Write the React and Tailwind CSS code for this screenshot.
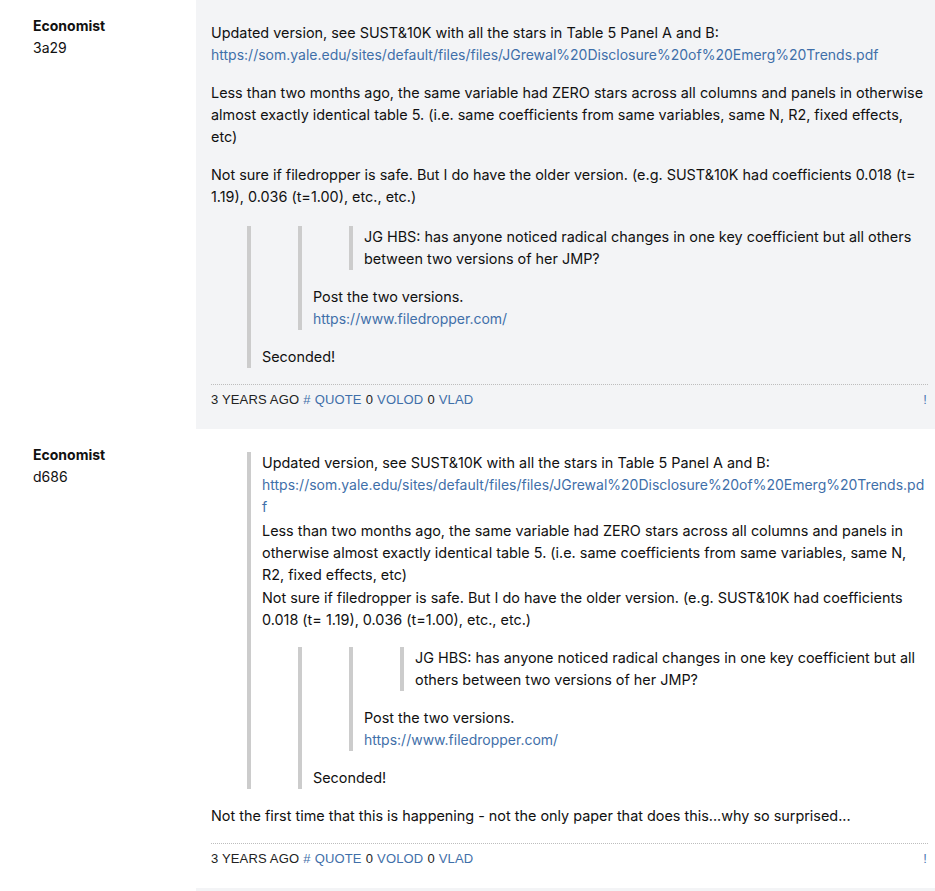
const yaleUrl = 'https://som.yale.edu/sites/default/files/files/JGrewal%20Disclosure%20of%20Emerg%20Trends.pdf'
const dropperUrl = 'https://www.filedropper.com/'

function Link({ href, children }) {
  return (
    <a href={href} className="text-[#3f6fa9] text-[14px] break-all">
      {children}
    </a>
  )
}

function Quote({ children, className = '' }) {
  return <blockquote className={`ml-[36px] border-l-4 border-[#cccccc] pl-[11px] ${className}`}>{children}</blockquote>
}

function Author({ name, id }) {
  return (
    <div className="w-[196px] flex-shrink-0 pl-[33px] pt-[15px] text-[14px]">
      <div className="font-bold">{name}</div>
      <div>{id}</div>
    </div>
  )
}

function PostFooter() {
  return (
    <div className="mt-4 border-t border-dotted border-[#bdbdbd] pt-[6px] flex justify-between font-['Liberation_Sans',Arial,sans-serif] text-[13px] tracking-[0.16px] leading-[18px] text-[#222]">
      <div className="flex gap-[4px]">
        <span>3 YEARS AGO</span>
        <a href="#" className="text-[#3f6fa9]">#</a>
        <a href="#" className="text-[#3f6fa9]">QUOTE</a>
        <span>0</span>
        <a href="#" className="text-[#3f6fa9]">VOLOD</a>
        <span>0</span>
        <a href="#" className="text-[#3f6fa9]">VLAD</a>
      </div>
      <a href="#" className="text-[#4d79b3] pr-[1px]">!</a>
    </div>
  )
}

function NestedQuotes() {
  return (
    <Quote>
      <Quote className="mb-4">
        <Quote className="mb-4">
          <p>JG HBS: has anyone noticed radical changes in one key coefficient but all others between two versions of her JMP?</p>
        </Quote>
        <p>
          Post the two versions.
          <br />
          <Link href={dropperUrl}>{dropperUrl}</Link>
        </p>
      </Quote>
      <p>Seconded!</p>
    </Quote>
  )
}

export default function App() {
  return (
    <div className="min-h-screen bg-white font-['Inter',sans-serif] text-[14.4px] leading-[22px] text-[#111]">
      <div className="flex">
        <Author name="Economist" id="3a29" />
        <div className="flex-1 min-w-0 bg-[#f3f4f6] pl-[15px] pr-[7px] pt-[22px] pb-[20px]">
          <div className="flex flex-col gap-4">
            <p>
              Updated version, see SUST&amp;10K with all the stars in Table 5 Panel A and B:
              <br />
              <Link href={yaleUrl}>{yaleUrl}</Link>
            </p>
            <p>
              Less than two months ago, the same variable had ZERO stars across all columns and panels in otherwise almost exactly
              identical table 5. (i.e. same coefficients from same variables, same N, R2, fixed effects, etc)
            </p>
            <p>
              Not sure if filedropper is safe. But I do have the older version. (e.g. SUST&amp;10K had coefficients 0.018 (t= 1.19),
              0.036 (t=1.00), etc., etc.)
            </p>
            <div className="pt-[2px]">
              <NestedQuotes />
            </div>
          </div>
          <PostFooter />
        </div>
      </div>

      <div className="flex">
        <Author name="Economist" id="d686" />
        <div className="flex-1 min-w-0 pl-[15px] pr-[7px] pt-[23px] pb-[20px]">
          <Quote>
            <div className="mb-4">
              <p>Updated version, see SUST&amp;10K with all the stars in Table 5 Panel A and B:</p>
              <Link href={yaleUrl}>{yaleUrl}</Link>
              <p className="mt-[2px]">
                Less than two months ago, the same variable had ZERO stars across all columns and panels in otherwise almost
                exactly identical table 5. (i.e. same coefficients from same variables, same N, R2, fixed effects, etc)
              </p>
              <p className="mt-[1px]">
                Not sure if filedropper is safe. But I do have the older version. (e.g. SUST&amp;10K had coefficients 0.018 (t=
                1.19), 0.036 (t=1.00), etc., etc.)
              </p>
            </div>
            <NestedQuotes />
          </Quote>
          <p className="mt-4">Not the first time that this is happening - not the only paper that does this...why so surprised...</p>
          <PostFooter />
        </div>
      </div>

      <div className="flex">
        <div className="w-[196px] flex-shrink-0" />
        <div className="flex-1 min-w-0 h-[120px] bg-[#f3f4f6]" />
      </div>
    </div>
  )
}
